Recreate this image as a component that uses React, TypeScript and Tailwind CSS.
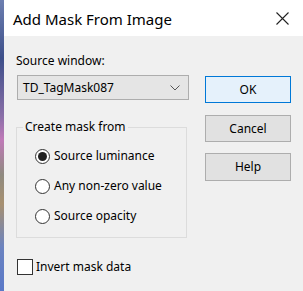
import React from "react";

const font = { fontFamily: '"Segoe UI", "Noto Sans", "Open Sans", sans-serif' };

function Radio({ checked, label }: { checked?: boolean; label: string }) {
  return (
    <div className="flex items-center h-[16px]">
      <div className="w-[15px] h-[15px] rounded-full border border-[#333] bg-white flex items-center justify-center shrink-0">
        {checked && <div className="w-[9px] h-[9px] rounded-full bg-[#222]" />}
      </div>
      <span className="ml-[4px] text-[12px] text-black leading-[16px]">{label}</span>
    </div>
  );
}

export default function App() {
  return (
    <div className="w-[303px] h-[291px] flex overflow-hidden" style={font}>
      <div className="w-[4px] h-full bg-[linear-gradient(180deg,#6d7fb0_0%,#3d4f8a_20%,#8a6fa8_40%,#c07ab8_48%,#8f8a80_60%,#a79070_70%,#6b83c0_85%,#5a78c8_100%)]" />
      <div className="flex-1 flex flex-col bg-[#f0f0f0]">
        <div className="h-[36px] bg-white flex items-center justify-between pl-[9px] pr-[14px]">
          <span className="text-[15px] text-black leading-[20px] pt-[1px]">Add Mask From Image</span>
          <svg width="13" height="13" viewBox="0 0 13 13" className="mt-[1px]">
            <path d="M0.5 0.5 L12.5 12.5 M12.5 0.5 L0.5 12.5" stroke="#222" strokeWidth="1.1" />
          </svg>
        </div>
        <div className="flex">
          <div className="ml-[12px] w-[172px] flex flex-col">
            <div className="mt-[17px] ml-[0px] text-[12px] leading-[16px] text-black">Source window:</div>
            <div className="mt-[6px] ml-[1px] h-[25px] w-[172px] border border-[#adadad] bg-[#e5e5e5] flex items-center justify-between pl-[5px] pr-[8px]">
              <span className="text-[12px] leading-[16px] text-black">TD_TagMask087</span>
              <svg width="10" height="6" viewBox="0 0 10 6">
                <path d="M0.5 0.5 L5 5 L9.5 0.5" fill="none" stroke="#555" strokeWidth="1" />
              </svg>
            </div>
            <div className="relative mt-[27px] ml-[0px] h-[111px] w-[171px] border border-[#dcdcdc]">
              <div className="absolute left-[6px] top-[-9px] px-[2px] bg-[#f0f0f0] text-[12px] leading-[16px] text-black">
                Create mask from
              </div>
              <div className="flex flex-col pl-[18px] pt-[20px] gap-[14px]">
                <Radio checked label="Source luminance" />
                <Radio label="Any non-zero value" />
                <Radio label="Source opacity" />
              </div>
            </div>
            <div className="mt-[21px] ml-[1px] flex items-center">
              <div className="w-[16px] h-[16px] border border-[#333] bg-white" />
              <span className="ml-[3px] text-[12px] leading-[16px] text-black">Invert mask data</span>
            </div>
          </div>
          <div className="ml-[17px] w-[86px] flex flex-col">
            <button className="mt-[40px] h-[27px] w-[86px] border border-[#0078d7] bg-[#e5f1fb] text-[12px] text-black">OK</button>
            <button className="mt-[12px] h-[27px] w-[86px] border border-[#adadad] bg-[#e1e1e1] text-[12px] text-black">Cancel</button>
            <button className="mt-[11px] h-[28px] w-[86px] border border-[#adadad] bg-[#e1e1e1] text-[12px] text-black">Help</button>
          </div>
        </div>
      </div>
    </div>
  );
}
